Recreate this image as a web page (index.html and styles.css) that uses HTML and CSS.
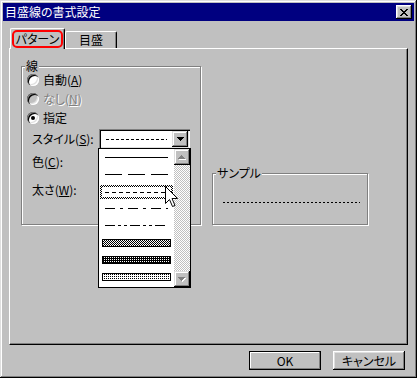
FILE: index.html
```html
<!DOCTYPE html>
<html lang="ja">
<head>
    <meta charset="UTF-8">
    <title>目盛線の書式設定</title>
    <link rel="stylesheet" href="styles.css">
</head>
<body>
<div class="window">

    <!-- Title bar -->
    <div class="titlebar">
        <span class="title">目盛線の書式設定</span>
        <button class="close-btn">
            <svg width="8" height="7" viewBox="0 0 8 7" shape-rendering="crispEdges">
                <path d="M0 0h2v1h-2z M6 0h2v1h-2z M1 1h2v1h-2z M5 1h2v1h-2z M2 2h4v1h-4z M3 3h2v1h-2z M2 4h4v1h-4z M1 5h2v1h-2z M5 5h2v1h-2z M0 6h2v1h-2z M6 6h2v1h-2z" fill="#000"/>
            </svg>
        </button>
    </div>

    <!-- Tabs -->
    <div class="tabs">
        <div class="tab active"><span class="tab-mark">パターン</span></div>
        <div class="tab tab-scale">目盛</div>
    </div>

    <!-- Tab page -->
    <div class="panel">
        <div class="panel-row">

            <div class="group group-line">
                <span class="group-label">線</span>

                <div class="radio-row">
                    <span class="radio"></span>
                    <span>自動(<u>A</u>)</span>
                </div>
                <div class="radio-row disabled">
                    <span class="radio"></span>
                    <span>なし(<u>N</u>)</span>
                </div>
                <div class="radio-row">
                    <span class="radio checked"></span>
                    <span>指定</span>
                </div>

                <div class="field-row row-style">
                    <span class="field-label">スタイル(<u>S</u>):</span>
                    <div class="combo">
                        <div class="combo-value"><div class="dash dash-short"></div></div>
                        <div class="combo-btn">
                            <svg width="7" height="4" viewBox="0 0 7 4" shape-rendering="crispEdges">
                                <path d="M0 0h7v1h-1v1h-1v1h-1v1h-1v-1h-1v-1h-1v-1h-1z" fill="#000"/>
                            </svg>
                        </div>

                        <!-- open drop-down list -->
                        <div class="dropdown">
                            <div class="list">
                                <div class="item"><div class="line line-solid"></div></div>
                                <div class="item"><div class="line line-long"></div></div>
                                <div class="item selected">
                                    <div class="focus"><div class="focus-inner"><div class="line line-short"></div></div></div>
                                </div>
                                <div class="item"><div class="line line-dashdot"></div></div>
                                <div class="item"><div class="line line-dashdotdot"></div></div>
                                <div class="item"><div class="bar bar-50"></div></div>
                                <div class="item"><div class="bar bar-75"></div></div>
                                <div class="item"><div class="bar bar-25"></div></div>
                            </div>
                            <div class="scrollbar">
                                <div class="sb-btn">
                                    <svg width="8" height="5" viewBox="0 0 8 5" shape-rendering="crispEdges">
                                        <path d="M4 1h1v1h1v1h1v1h1v1h-7v-1h1v-1h1v-1h1z" fill="#fff"/>
                                        <path d="M3 0h1v1h1v1h1v1h1v1h-7v-1h1v-1h1v-1h1z" fill="#808080"/>
                                    </svg>
                                </div>
                                <div class="sb-btn">
                                    <svg width="8" height="5" viewBox="0 0 8 5" shape-rendering="crispEdges">
                                        <path d="M1 1h7v1h-1v1h-1v1h-1v1h-1v-1h-1v-1h-1v-1h-1z" fill="#fff"/>
                                        <path d="M0 0h7v1h-1v1h-1v1h-1v1h-1v-1h-1v-1h-1v-1h-1z" fill="#808080"/>
                                    </svg>
                                </div>
                            </div>

                            <!-- mouse pointer -->
                            <svg class="cursor" width="13" height="22" viewBox="0 0 13 22">
                                <path d="M0.5 0.5 L0.5 17.5 L4.5 13.5 L7.5 20.5 L10 19.5 L7 12.5 L12.5 12.5 Z" fill="#fff" stroke="#000" stroke-width="1"/>
                            </svg>
                        </div>
                    </div>
                </div>

                <div class="field-row row-color">
                    <span class="field-label">色(<u>C</u>):</span>
                </div>
                <div class="field-row row-weight">
                    <span class="field-label">太さ(<u>W</u>):</span>
                </div>
            </div>

            <div class="group group-sample">
                <span class="group-label">サンプル</span>
                <div class="dash dash-sample"></div>
            </div>

        </div>
    </div>

    <!-- Dialog buttons -->
    <div class="footer">
        <button class="btn default">OK</button>
        <button class="btn">キャンセル</button>
    </div>

</div>
</body>
</html>
```

FILE: styles.css
```css
body {
    margin: 0;
    font-family: "Noto Sans CJK JP", "Noto Sans", sans-serif;
    font-size: 12px;
    line-height: 14px;
    font-feature-settings: "palt";
    color: #000;
    background: #c0c0c0;
}
.window {
    width: 417px;
    height: 378px;
    box-sizing: border-box;
    padding: 3px;
    background: #c0c0c0;
    box-shadow: inset -1px -1px #000, inset 1px 1px #dfdfdf, inset -2px -2px #808080, inset 2px 2px #fff;
    display: flex;
    flex-direction: column;
}
.titlebar {
    height: 18px;
    flex-shrink: 0;
    background: #000080;
    color: #fff;
    display: flex;
    align-items: center;
    justify-content: space-between;
    padding: 0 2px;
}
.close-btn {
    width: 16px;
    height: 14px;
    padding: 0;
    border: 0;
    background: #c0c0c0;
    box-shadow: inset -1px -1px #000, inset 1px 1px #fff, inset -2px -2px #808080, inset 2px 2px #dfdfdf;
    display: flex;
    align-items: center;
    justify-content: center;
}

/* tabs */
.tabs {
    display: flex;
    align-items: flex-end;
    height: 20px;
    flex-shrink: 0;
    margin: 7px 0 0 7px;
}
.tab {
    box-sizing: border-box;
    height: 17px;
    border-top: 1px solid #fff;
    border-left: 1px solid #fff;
    border-right: 1px solid #000;
    border-radius: 2px 2px 0 0;
    box-shadow: inset -1px 0 #808080;
    display: flex;
    align-items: center;
    justify-content: center;
}
.tab.active {
    width: 55px;
    height: 21px;
    margin-bottom: -1px;
    padding: 1px 1px 0;
    align-items: flex-start;
    position: relative;
    z-index: 1;
    background: #c0c0c0;
}
.tab-scale {
    width: 52px;
}
.tab-mark {
    box-sizing: border-box;
    width: 51px;
    height: 18px;
    border: 2px solid #f00;
    border-radius: 5px;
    display: flex;
    align-items: center;
    justify-content: center;
}

/* tab page */
.panel {
    box-sizing: border-box;
    height: 297px;
    flex-shrink: 0;
    margin: 0 6px;
    border: 1px solid;
    border-color: #fff #000 #000 #fff;
    box-shadow: inset -1px -1px #808080;
    padding: 17px 0 0 11px;
}
.panel-row {
    display: flex;
    align-items: flex-end;
    gap: 11px;
}
.group {
    position: relative;
    box-sizing: border-box;
    border: 1px solid #808080;
    box-shadow: 1px 1px 0 #fff, inset 1px 1px 0 #fff;
}
.group-label {
    position: absolute;
    top: -8px;
    left: 3px;
    padding: 0 1px;
    background: #c0c0c0;
}
.group-line {
    width: 180px;
    height: 159px;
    padding: 3px 0 0 5px;
}
.group-sample {
    width: 156px;
    height: 52px;
    padding: 28px 0 0 10px;
}

/* radios */
.radio-row {
    display: flex;
    align-items: center;
    gap: 4px;
    height: 19px;
}
.radio {
    position: relative;
    width: 12px;
    height: 12px;
    box-sizing: border-box;
    border-radius: 50%;
    background: #fff;
    box-shadow: inset 1px 1px 0 #808080, inset 2px 2px 0 #000, inset -1px -1px 0 #fff, inset -2px -2px 0 #dfdfdf;
}
.radio.checked::after {
    content: "";
    position: absolute;
    left: 4px;
    top: 4px;
    width: 4px;
    height: 4px;
    border-radius: 50%;
    background: #000;
}
.disabled {
    color: #808080;
    text-shadow: 1px 1px 0 #fff;
}
.disabled .radio {
    background: #c0c0c0;
}

/* label + combo rows */
.field-row {
    display: flex;
    align-items: center;
    height: 20px;
    padding-left: 5px;
}
.row-style {
    margin-top: 2px;
}
.row-color {
    margin-top: 3px;
}
.row-weight {
    margin-top: 8px;
}
.field-label {
    width: 67px;
}
.combo {
    position: relative;
    width: 91px;
    height: 20px;
    box-sizing: border-box;
    padding: 2px;
    background: #fff;
    box-shadow: inset 1px 1px #808080, inset 2px 2px #000, inset -1px -1px #fff, inset -2px -2px #dfdfdf;
    display: flex;
    align-items: center;
}
.combo-value {
    flex: 1;
    padding-left: 5px;
}
.combo-btn {
    width: 16px;
    height: 16px;
    box-sizing: border-box;
    background: #c0c0c0;
    box-shadow: inset -1px -1px #000, inset 1px 1px #dfdfdf, inset -2px -2px #808080, inset 2px 2px #fff;
    display: flex;
    align-items: center;
    justify-content: center;
}
.dash {
    height: 1px;
}
.dash-short {
    width: 61px;
    background: repeating-linear-gradient(90deg, #000 0 3px, transparent 3px 5px);
}
.dash-sample {
    width: 137px;
    background: repeating-linear-gradient(90deg, #000 0 2px, transparent 2px 4px);
}

/* drop-down list */
.dropdown {
    position: absolute;
    left: -1px;
    top: 19px;
    z-index: 2;
    width: 93px;
    height: 140px;
    box-sizing: border-box;
    border: 1px solid #000;
    background: #fff;
    display: flex;
}
.list {
    flex: 1;
}
.item {
    height: 17px;
    box-sizing: border-box;
    display: flex;
    align-items: center;
    justify-content: center;
}
.item.selected {
    padding: 2px 1px 1px;
    align-items: stretch;
}
.focus {
    flex: 1;
    padding: 2px;
    display: flex;
    background: repeating-conic-gradient(#000 0 25%, #fff 0 50%) 0 0 / 2px 2px;
}
.focus-inner {
    flex: 1;
    background: #fff;
    display: flex;
    align-items: center;
    justify-content: center;
}
.line {
    width: 63px;
    height: 1px;
}
.line-solid {
    background: #000;
}
.line-long {
    background: repeating-linear-gradient(90deg, #000 0 17px, transparent 17px 23px);
}
.line-short {
    background: repeating-linear-gradient(90deg, #000 0 4px, transparent 4px 7px);
}
.line-dashdot {
    background: repeating-linear-gradient(90deg, #000 0 10px, transparent 10px 15px, #000 15px 18px, transparent 18px 23px);
}
.line-dashdotdot {
    background: repeating-linear-gradient(90deg, #000 0 10px, transparent 10px 13px, #000 13px 16px, transparent 16px 19px, #000 19px 22px, transparent 22px 25px);
}
.bar {
    width: 69px;
    height: 8px;
    box-sizing: border-box;
    border: 1px solid #000;
}
.bar-50 {
    background: repeating-conic-gradient(#000 0 25%, #fff 0 50%) 0 0 / 2px 2px;
}
.bar-75 {
    background: repeating-conic-gradient(#fff 0 25%, #000 0 100%) 0 0 / 2px 2px;
}
.bar-25 {
    background: repeating-conic-gradient(#000 0 25%, #fff 0 100%) 0 0 / 2px 2px;
}
.scrollbar {
    width: 16px;
    display: flex;
    flex-direction: column;
    justify-content: space-between;
    background: repeating-conic-gradient(#c0c0c0 0 25%, #fff 0 50%) 0 0 / 2px 2px;
}
.sb-btn {
    height: 16px;
    box-sizing: border-box;
    background: #c0c0c0;
    box-shadow: inset -1px -1px #000, inset 1px 1px #dfdfdf, inset -2px -2px #808080, inset 2px 2px #fff;
    display: flex;
    align-items: center;
    justify-content: center;
}
.cursor {
    position: absolute;
    left: 66px;
    top: 37px;
}

/* footer buttons */
.footer {
    display: flex;
    justify-content: flex-end;
    gap: 12px;
    margin-top: 6px;
    padding-right: 9px;
}
.btn {
    width: 72px;
    height: 19px;
    box-sizing: border-box;
    padding: 0;
    border: 0;
    background: #c0c0c0;
    font: inherit;
    color: #000;
    box-shadow: inset -1px -1px #000, inset 1px 1px #fff, inset -2px -2px #808080, inset 2px 2px #dfdfdf;
}
.btn.default {
    box-shadow: inset 0 0 0 1px #000, inset -2px -2px #808080, inset 2px 2px #fff;
}
```
